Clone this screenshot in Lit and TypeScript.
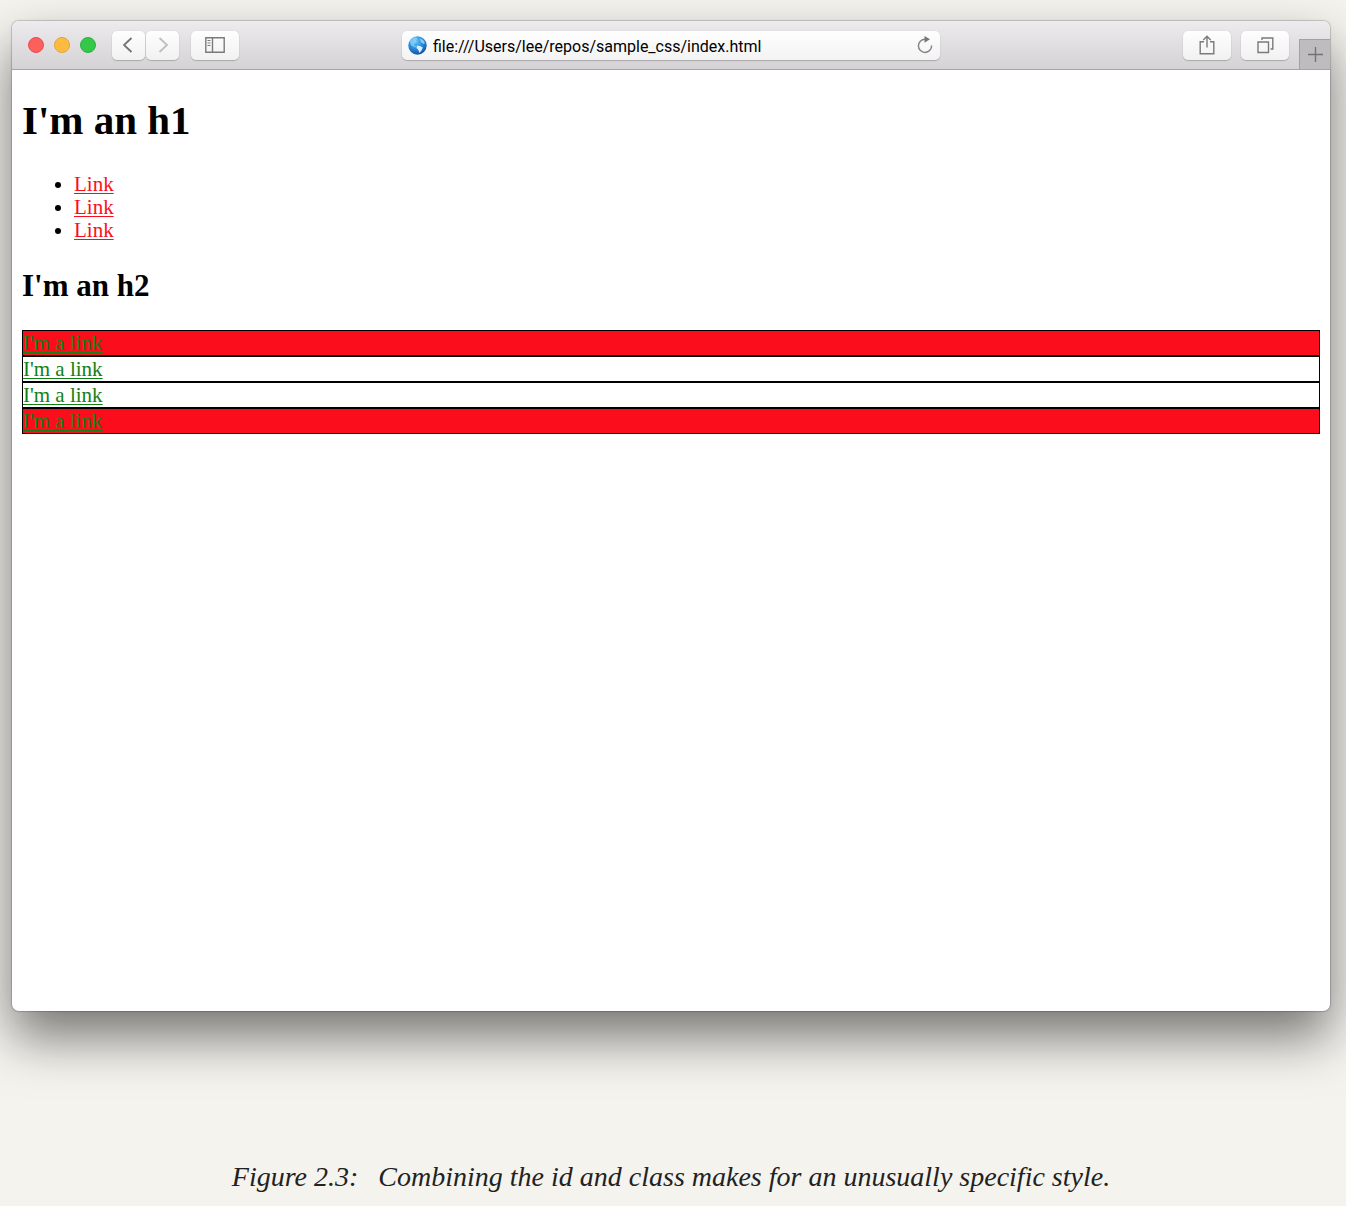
import { LitElement, html, css } from "lit";
import { customElement } from "lit/decorators.js";

@customElement("app-root")
export class AppRoot extends LitElement {
  static styles = css`
    :host {
      display: block;
      box-sizing: border-box;
      min-height: 100vh;
      background: #f4f3ee;
      overflow: hidden;
    }
    *,
    *::before {
      box-sizing: border-box;
    }
    .figure {
      margin: 0;
      padding: 21px 16px 12px 12px;
      min-height: 100vh;
      display: flex;
      flex-direction: column;
    }
    .window {
      display: flex;
      flex-direction: column;
      flex: 1;
      border-radius: 7px;
      background: #fff;
      overflow: hidden;
      box-shadow: 0 0 1px 1px rgba(0, 0, 0, 0.18), 0 26px 52px rgba(0, 0, 0, 0.52);
    }
    .toolbar {
      display: grid;
      grid-template-columns: 1fr minmax(200px, 538px) 1fr;
      align-items: center;
      height: 49px;
      background: linear-gradient(#edebee, #d4d2d5);
      border-bottom: 1px solid #a5a3a5;
    }
    .left,
    .right {
      display: flex;
      align-items: center;
      height: 100%;
    }
    .left {
      padding-left: 16px;
    }
    .right {
      justify-content: flex-end;
      gap: 10px;
    }
    button {
      font: inherit;
      padding: 0;
      border: 0;
      display: flex;
      align-items: center;
      justify-content: center;
    }
    .lights {
      display: flex;
      gap: 10px;
      margin-right: 16px;
    }
    .light {
      width: 16px;
      height: 16px;
      border-radius: 50%;
    }
    .close {
      background: #fc605c;
      border: 1px solid #e94f4b;
    }
    .minimize {
      background: #fdbc40;
      border: 1px solid #e2a439;
    }
    .maximize {
      background: #34c84a;
      border: 1px solid #2cb041;
    }
    .tool {
      width: 48px;
      height: 29px;
      border-radius: 5px;
      background: linear-gradient(#fefefe, #f2f1f2);
      box-shadow: 0 1px 1px rgba(0, 0, 0, 0.2), 0 0 1px rgba(0, 0, 0, 0.2);
    }
    .arrows {
      display: flex;
      gap: 1px;
      margin-right: 12px;
    }
    .arrows .tool {
      width: 33px;
    }
    .address {
      display: flex;
      align-items: center;
      gap: 6px;
      height: 29px;
      padding: 0 6px;
      border-radius: 5px;
      background: linear-gradient(#fefefe, #f4f3f4);
      box-shadow: 0 1px 1px rgba(0, 0, 0, 0.2), 0 0 1px rgba(0, 0, 0, 0.2);
    }
    .url {
      flex: 1;
      min-width: 0;
      padding: 4px 0 0;
      border: 0;
      outline: 0;
      background: none;
      color: #000;
      font: 16px/20px Roboto, "Liberation Sans", sans-serif;
    }
    .reload {
      background: none;
    }
    .new-tab {
      align-self: flex-end;
      width: 31px;
      height: 30px;
      background: #bebcbf;
      border-top: 1px solid #a3a1a4;
      border-left: 1px solid #a3a1a4;
    }
    svg {
      display: block;
      fill: none;
    }
    .page {
      flex: 1;
      padding: 27px 10px;
      color: #000;
      font: 21px/23px "Liberation Serif", "Times New Roman", serif;
    }
    h1 {
      margin: 0 0 30px;
      font-size: 41px;
      line-height: 46px;
    }
    h2 {
      margin: 26px 0;
      font-size: 31px;
      line-height: 36px;
    }
    .links {
      margin: 0;
      padding-left: 52px;
    }
    .links a {
      color: #fc0d1b;
    }
    .box {
      border: 1px solid #000;
      line-height: 24px;
    }
    .box a {
      color: #118014;
    }
    a {
      text-decoration-thickness: 1px;
      text-underline-offset: 2px;
    }
    .filled {
      background: #fc0d1b;
    }
    .caption {
      margin-top: 149px;
      display: flex;
      flex-wrap: wrap;
      justify-content: center;
      gap: 20px;
      color: #222;
      font: italic 28px/34px Georgia, "Liberation Serif", serif;
    }
  `;

  private boxes = [true, false, false, true];

  render() {
    return html`
      <figure class="figure">
        <div class="window">
          <div class="toolbar">
            <div class="left">
              <div class="lights">
                <button class="light close" aria-label="Close"></button>
                <button class="light minimize" aria-label="Minimize"></button>
                <button class="light maximize" aria-label="Zoom"></button>
              </div>
              <div class="arrows">
                <button class="tool" aria-label="Back">
                  <svg width="12" height="18" viewBox="0 0 12 18" stroke="#737373" stroke-width="1.8"><path d="M8.500 2 1 9l7.500 7" /></svg>
                </button>
                <button class="tool" aria-label="Forward">
                  <svg width="12" height="18" viewBox="0 0 12 18" stroke="#bfbfbf" stroke-width="1.8"><path d="M2.500 2l7.500 7-7.500 7" /></svg>
                </button>
              </div>
              <button class="tool" aria-label="Sidebar">
                <svg width="20" height="16" viewBox="0 0 20 16" stroke="#7a7a7a" stroke-width="1.4">
                  <path d="M.8.800h18.400v14.400H.800zM7.500.8v14.400" />
                  <path d="M2.500 3.500h3M2.500 6h3M2.500 8.500h3" stroke-width="1" />
                </svg>
              </button>
            </div>
            <div class="address">
              <svg width="19" height="19" viewBox="0 0 19 19">
                <defs>
                  <radialGradient id="sea" cx=".4" cy=".25" r=".8">
                    <stop offset="0" stop-color="#62c4f8" />
                    <stop offset=".55" stop-color="#2688dc" />
                    <stop offset="1" stop-color="#164a94" />
                  </radialGradient>
                </defs>
                <circle cx="9.500" cy="9.500" r="9.200" fill="url(#sea)" />
                <path d="M1.500 5.500Q4 1.800 8 1.200L9.500 2.500 8 4.500 9 6 6.500 7.500 6 9.500 8.500 10.500 7 11.500 3.500 9.500Z" fill="#8fd3f5" opacity=".75" />
                <path d="M9 9.500l3 .5 2.800 1.500-1 2.500-2.300 3-1-2.800L8.500 12z" fill="#d9eef8" />
                <path d="M12 2.500l3 1.500 2 3-1.500 1-2.500-2z" fill="#a4dbf6" opacity=".8" />
              </svg>
              <input class="url" type="text" aria-label="Address" spellcheck="false" .value=${"file:///Users/lee/repos/sample_css/index.html"} />
              <button class="reload" aria-label="Reload">
                <svg width="18" height="18" viewBox="0 0 18 18">
                  <path d="M9 3.200A6.600 6.600 0 1 0 15.600 9.500" stroke="#858585" stroke-width="1.5" />
                  <path d="M8.500 0 14 3.300 8.500 6.800z" fill="#777" />
                </svg>
              </button>
            </div>
            <div class="right">
              <button class="tool" aria-label="Share">
                <svg width="16" height="20" viewBox="0 0 16 20" stroke="#7a7a7a" stroke-width="1.4">
                  <path d="M5 6.700H1.200v12h13.600v-12H11M8 12.500V1.500M4.300 5 8 1.300 11.700 5" />
                </svg>
              </button>
              <button class="tool" aria-label="Show all tabs">
                <svg width="17" height="17" viewBox="0 0 17 17" stroke="#7a7a7a" stroke-width="1.4">
                  <path d="M1 5h10.500v10.500H1zM5 3V1h10.800v11H13.500" />
                </svg>
              </button>
              <button class="new-tab" aria-label="New tab">
                <svg width="15" height="15" viewBox="0 0 15 15" stroke="#747274" stroke-width="1.4"><path d="M7.500 0v15M0 7.500h15" /></svg>
              </button>
            </div>
          </div>
          <div class="page">
            <h1>I'm an h1</h1>
            <ul class="links">
              ${[1, 2, 3].map(() => html`<li><a href="#">Link</a></li>`)}
            </ul>
            <h2>I'm an h2</h2>
            ${this.boxes.map(
              (filled) => html`<div class="box ${filled ? "filled" : ""}"><a href="#">I'm a link</a></div>`
            )}
          </div>
        </div>
        <figcaption class="caption">
          <span>Figure 2.3:</span>
          <span>Combining the id and class makes for an unusually specific style.</span>
        </figcaption>
      </figure>
    `;
  }
}
